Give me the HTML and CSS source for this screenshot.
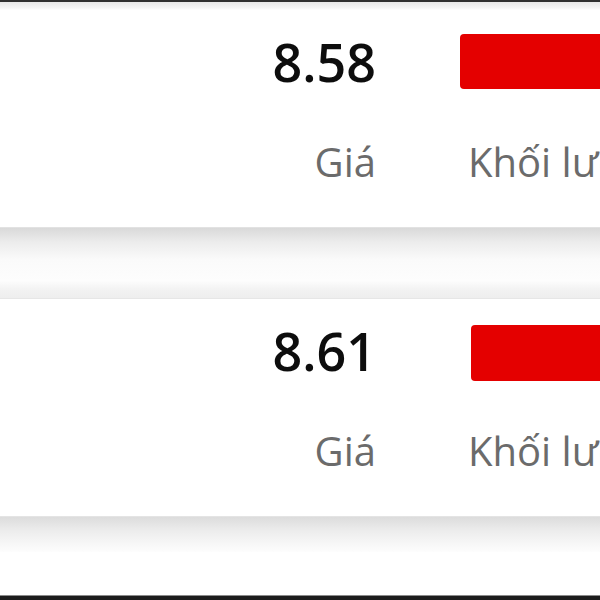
FILE: index.html
```html
<!DOCTYPE html>
<html lang="vi">
<head>
    <meta charset="UTF-8">
    <meta name="viewport" content="width=device-width, initial-scale=1.0">
    <title>Bảng giá</title>
    <link rel="stylesheet" href="styles.css">
</head>
<body>
    <div class="edge-top"></div>
    <div class="band band-top"></div>

    <section class="quote">
        <div class="price">8.58</div>
        <div class="volume"><span class="mask"></span></div>
        <div class="label">Giá</div>
        <div class="label label-vol">Khối lượng</div>
    </section>

    <div class="band band-mid"></div>

    <section class="quote">
        <div class="price">8.61</div>
        <div class="volume"><span class="mask mask-alt"></span></div>
        <div class="label">Giá</div>
        <div class="label label-vol">Khối lượng</div>
    </section>

    <div class="band band-low"></div>
    <div class="tail"></div>
    <div class="edge-bottom"></div>
</body>
</html>
```

FILE: styles.css
```css
/* General */
html, body {
    margin: 0;
    padding: 0;
}

body {
    width: 600px;
    height: 600px;
    overflow: hidden;
    background: #fff;
    font-family: 'Open Sans', 'Noto Sans', sans-serif;
    color: #111;
}

/* Edges and separators */
.edge-top {
    height: 2px;
    background: #2e2e2e;
}

.band {
    width: 100%;
}

.band-top {
    height: 8px;
    background: linear-gradient(#e6e6e6, #f3f3f3 70%, #fdfdfd);
}

.band-mid {
    height: 72px;
    border-top: 1px solid #e2e2e2;
    border-bottom: 1px solid #e6e6e6;
    box-sizing: border-box;
    background: linear-gradient(#d9d9d9, #ececec 20%, #fafafa 45%, #fdfdfd 75%, #f1f1f1 90%, #eeeeee);
}

.band-low {
    height: 36px;
    border-top: 1px solid #e4e4e4;
    box-sizing: border-box;
    background: linear-gradient(#dcdcdc, #ebebeb 35%, #f8f8f8 80%, #fdfdfd);
}

.tail {
    height: 43px;
}

.edge-bottom {
    height: 5px;
    border-top: 1px solid #8a8a8a;
    background: #1c1c1c;
}

/* Quote card */
.quote {
    display: grid;
    grid-template-columns: 376px 1fr;
    grid-template-rows: 60px 60px;
    column-gap: 89px;
    row-gap: 41px;
    padding: 21px 0 35px;
    background: #fff;
    white-space: nowrap;
}

.price {
    text-align: right;
    font-size: 52px;
    font-weight: 600;
    line-height: 62px;
    color: #0d0d0d;
}

.volume {
    display: flex;
    align-items: center;
}

.mask {
    display: block;
    width: 160px;
    height: 55px;
    margin-left: -5px;
    margin-top: 0;
    border-radius: 4px;
    background: #e40000;
}

.mask-alt {
    margin-left: 6px;
    margin-top: 6px;
    height: 56px;
}

.label {
    text-align: right;
    font-size: 40px;
    line-height: 60px;
    color: #6b6b6b;
}

.label-vol {
    text-align: left;
    padding-left: 3px;
}
```
